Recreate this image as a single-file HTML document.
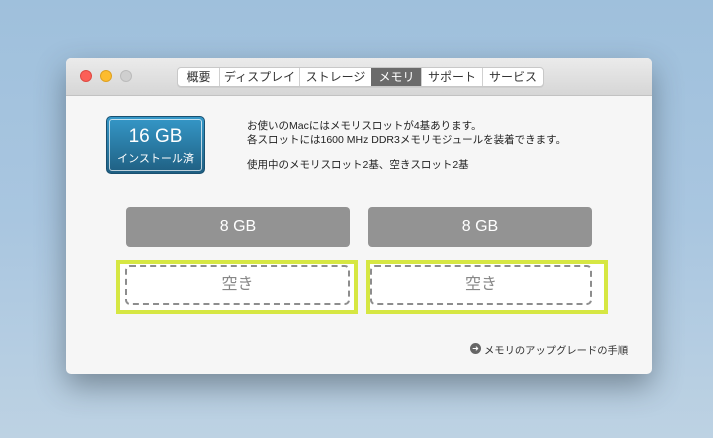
<!DOCTYPE html>
<html><head><meta charset="utf-8"><style>
*{margin:0;padding:0;box-sizing:border-box}
body{width:713px;height:438px;overflow:hidden;position:relative;font-family:"Liberation Sans","Noto Sans CJK JP",sans-serif;background:linear-gradient(180deg,#9fc0dc 0%,#a9c6e0 50%,#bdd2e3 100%)}
.win{position:absolute;left:66px;top:58px;width:586px;height:316px;background:#f6f6f6;border-radius:5px;box-shadow:0 12px 30px rgba(40,50,60,.45);overflow:hidden}
.tb{position:absolute;left:0;top:0;width:586px;height:38px;background:linear-gradient(#ebebeb,#d6d6d6);border-bottom:1px solid #c2c2c2}
.dot{position:absolute;top:12px;width:12px;height:12px;border-radius:50%}
.tabs{position:absolute;left:111px;top:9px;height:20px;display:flex;border:1px solid #c8c8c8;border-radius:4px;background:#fff;overflow:hidden;box-shadow:0 1px 0 rgba(0,0,0,.05)}
.tabs div{font-size:12px;color:#333;line-height:18px;text-align:center;border-left:1px solid #d0d0d0}
.tabs div:first-child{border-left:none}
.tabs .on{background:#6b6b6b;color:#fff;border-left-color:#6b6b6b}
.badge{position:absolute;left:40px;top:58px;width:99px;height:58px;border-radius:5px;background:linear-gradient(#3598c8,#1f5f82);border:1px solid #1a5070;color:#fff;text-align:center}
.badge .in{position:absolute;left:2px;top:2px;right:2px;bottom:2px;border:1px solid rgba(255,255,255,.7);border-radius:3px}
.t{position:absolute;left:181px;font-size:10.5px;color:#222;white-space:nowrap}
.bar{position:absolute;top:149px;width:224px;height:40px;border-radius:4px;background:#939393;color:#fff;font-size:16px;text-align:center;line-height:40px}
.y{position:absolute;top:202px;height:54px;border:4px solid #d6e743;background:#fff}
.d{position:absolute;top:207px;height:40px;border:2px dashed #8d8d8d;border-radius:5px;background:#fff;color:#888;font-size:16px;text-align:center;line-height:36px}
</style></head><body>
<div class="win">
<div class="tb">
<div class="dot" style="left:14px;background:#fc5f57;border:1px solid #de4a42"></div>
<div class="dot" style="left:34px;background:#fdbc2e;border:1px solid #dea123"></div>
<div class="dot" style="left:54px;background:#cfcfcf;border:1px solid #bbb"></div>
<div class="tabs">
<div style="width:41px">概要</div><div style="width:80px">ディスプレイ</div><div style="width:72px">ストレージ</div><div class="on" style="width:50px">メモリ</div><div style="width:61px">サポート</div><div style="width:61px">サービス</div>
</div>
</div>
<div class="badge"><div class="in"></div><div style="font-size:19px;margin-top:9px;line-height:21px">16 GB</div><div style="font-size:11px;margin-top:3px">インストール済</div></div>
<div class="t" style="top:60px">お使いのMacにはメモリスロットが4基あります。</div>
<div class="t" style="top:74px">各スロットには1600 MHz DDR3メモリモジュールを装着できます。</div>
<div class="t" style="top:99px">使用中のメモリスロット2基、空きスロット2基</div>
<div class="bar" style="left:60px">8 GB</div>
<div class="bar" style="left:302px">8 GB</div>
<div class="y" style="left:50px;width:242px"></div>
<div class="y" style="left:300px;width:242px"></div>
<div class="d" style="left:59px;width:225px">空き</div>
<div class="d" style="left:304px;width:222px">空き</div>
<div style="position:absolute;left:404px;top:285px;width:11px;height:11px;border-radius:50%;background:#666;color:#fff;font-size:8px;line-height:11px;text-align:center">➜</div>
<div style="position:absolute;left:418px;top:284px;font-size:10.3px;color:#333;white-space:nowrap">メモリのアップグレードの手順</div>
</div>
</body></html>
